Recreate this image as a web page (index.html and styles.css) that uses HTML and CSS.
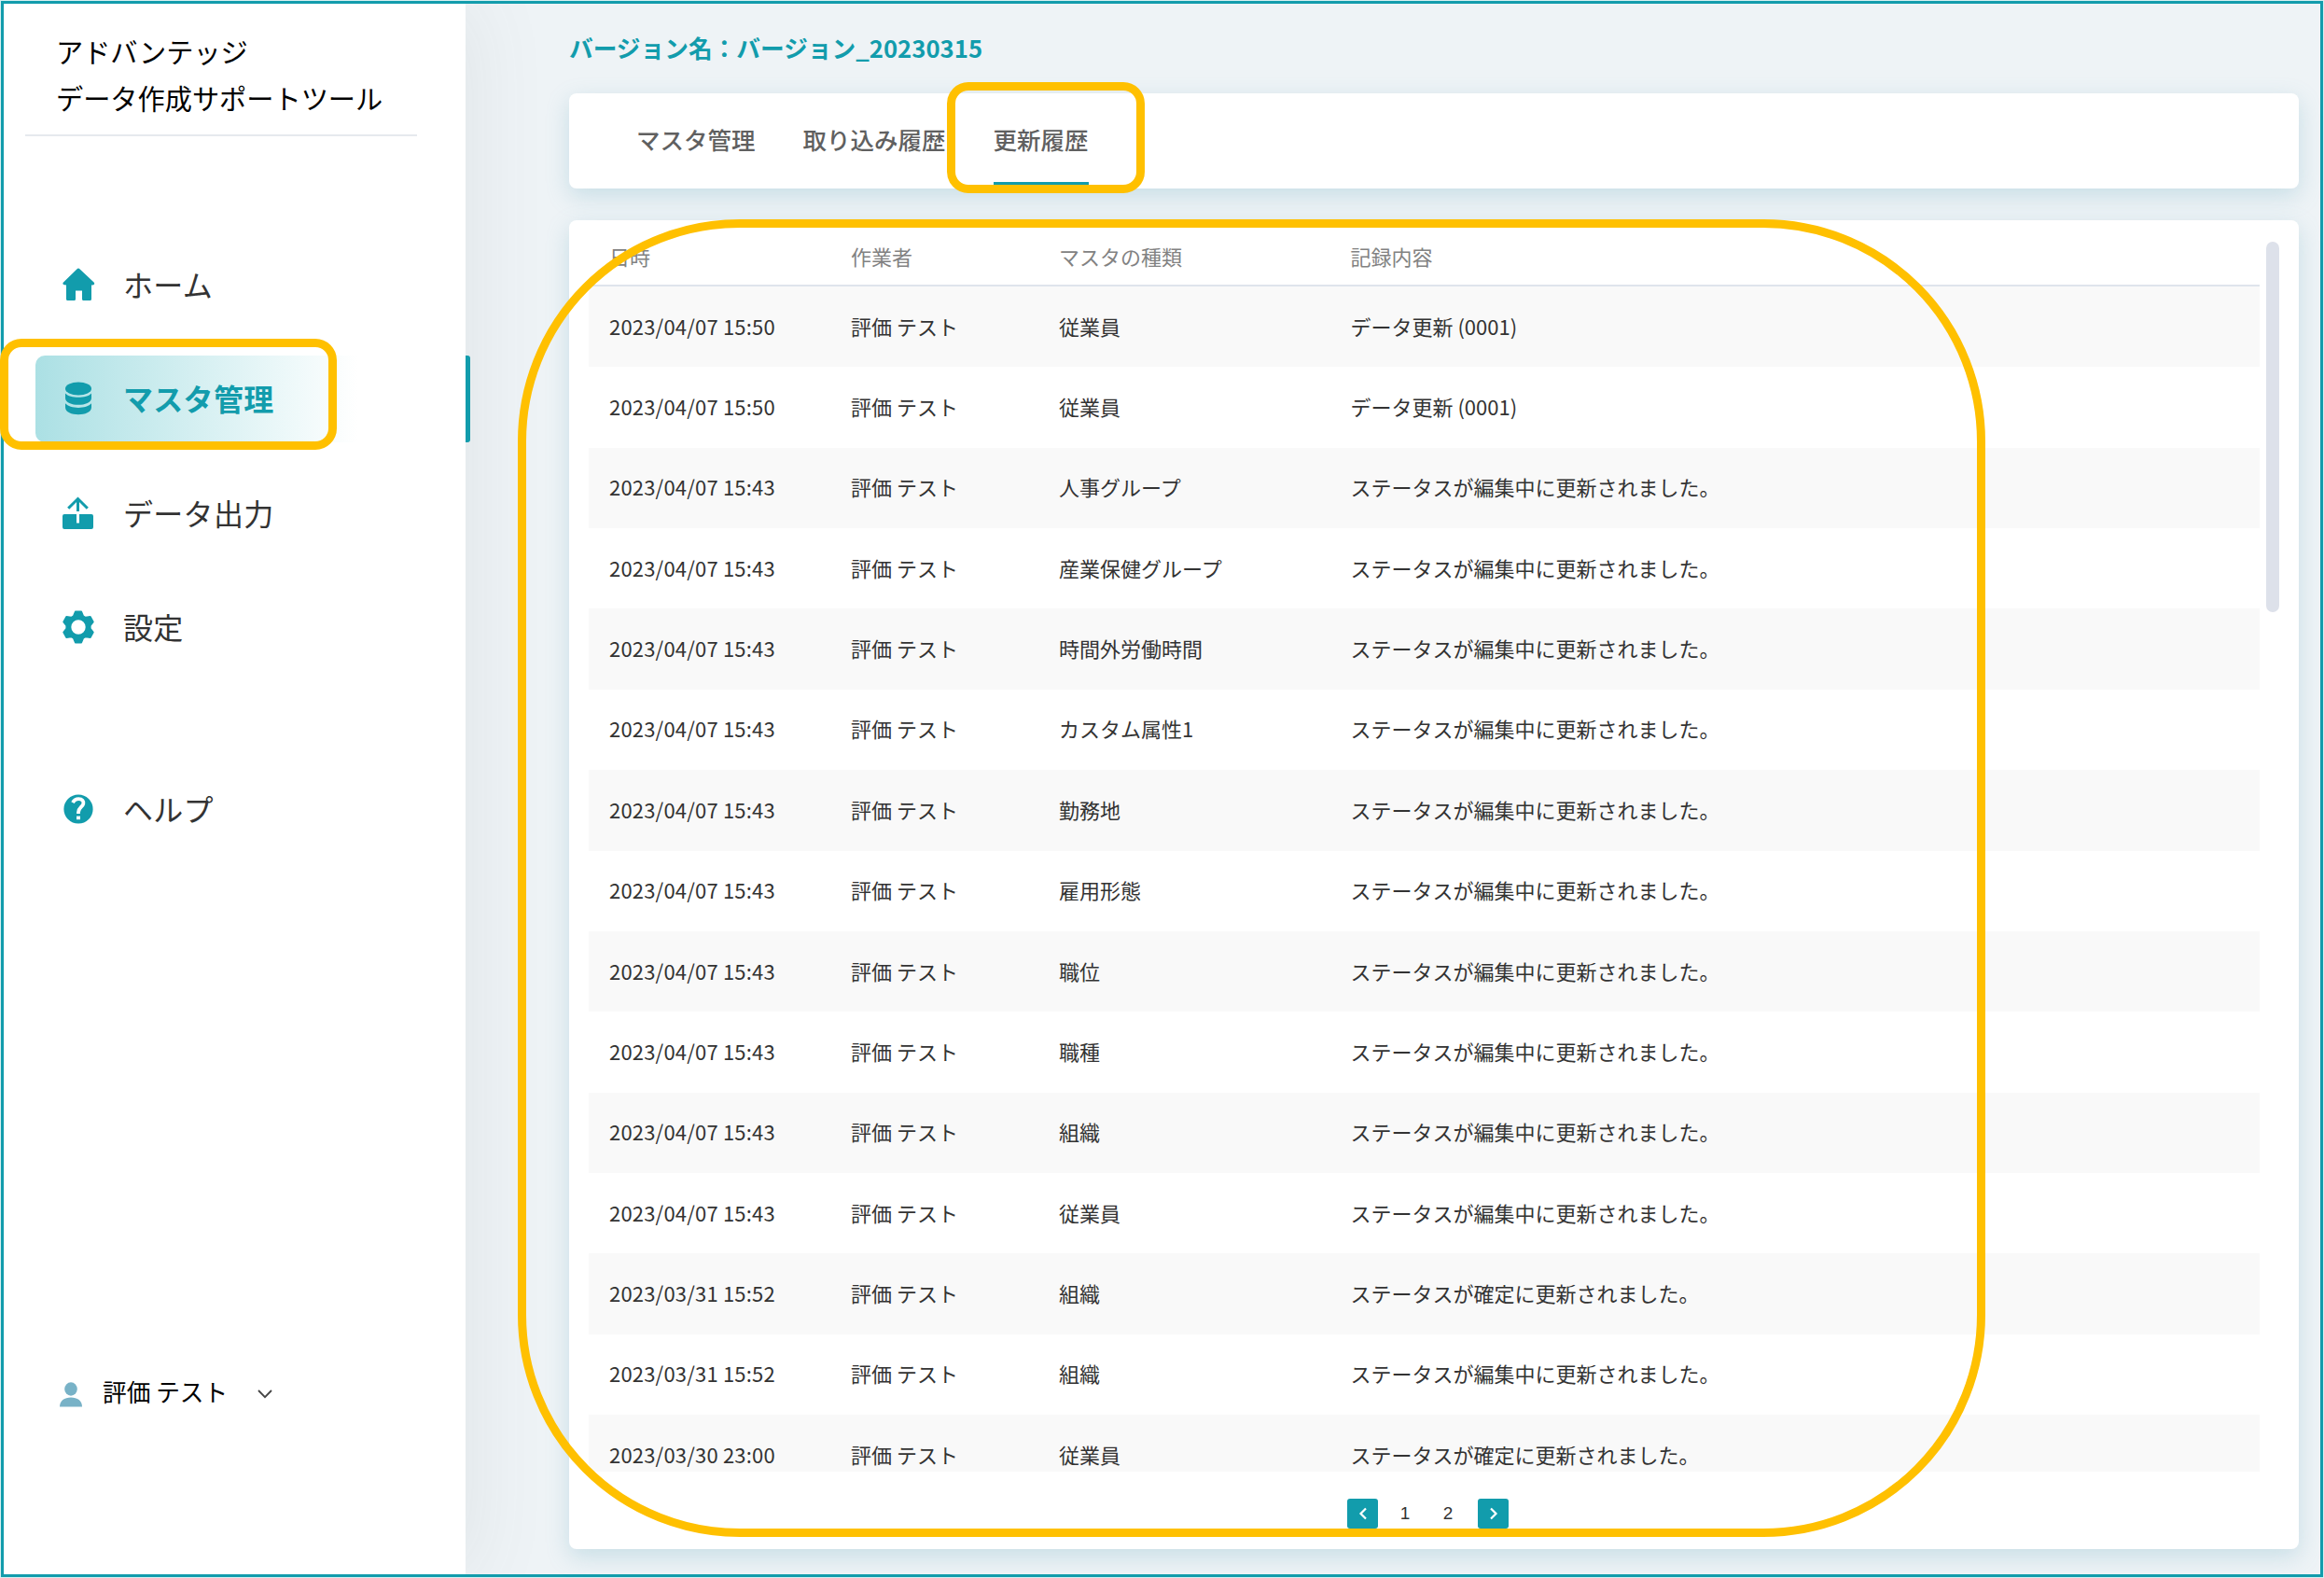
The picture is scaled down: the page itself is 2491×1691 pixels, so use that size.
FILE: index.html
```html
<!DOCTYPE html>
<html lang="ja">
<head>
<meta charset="utf-8">
<title>更新履歴</title>
<link rel="stylesheet" href="styles.css">
</head>
<body>
<div class="app">
  <aside class="sidebar">
    <div class="brand">アドバンテッジ<br>データ作成サポートツール</div>
    <nav class="nav">
      <a class="nav-item">
        <svg class="nav-icon" viewBox="0 0 36 36"><path d="M16.6 1.2q1.4-1.3 2.8 0L34.6 15.6q1.2 1.4 0 2.4-.7.5-2.6.5V33.500q0 1.500-1.500 1.500H23.500q-1.500 0-1.500-1.500V24.500h-7V33.500q0 1.500-1.500 1.500H6.500Q5 35 5 33.500V18.500q-2.500 0-3.200-.8-.9-1 .2-2.100z"/></svg>
        <span>ホーム</span>
      </a>
      <a class="nav-item active">
        <svg class="nav-icon" viewBox="0 0 36 36"><ellipse cx="18" cy="7.500" rx="14" ry="7"/><path d="M4 12.500C9 18.300 27 18.300 32 12.500V17.500C32 27.300 4 27.300 4 17.500zM4 23.300C9 29.500 27 29.500 32 23.300V27.500C32 37.800 4 37.800 4 27.500z"/></svg>
        <span>マスタ管理</span>
      </a>
      <a class="nav-item">
        <svg class="nav-icon" viewBox="0 0 36 36"><path d="M3 19h13v9.500h3V19h13q2 0 2 2V33q0 2-2 2H3q-2 0-2-2V21q0-2 2-2z"/><path class="stroke" d="M17.500 16V2.500M7.200 12.800 17.500 2.500 27.800 12.800"/></svg>
        <span>データ出力</span>
      </a>
      <a class="nav-item">
        <svg class="nav-icon" viewBox="0 0 36 36"><path class="gear" fill-rule="evenodd" d="M14.800 1.500h6.400l2 4.800 2.500 1.400 5.100-.7 3 5.400-3.100 4v3.200l3.100 4-3 5.400-5.100-.7-2.500 1.400-2 4.800h-6.400l-2-4.800-2.500-1.400-5.100.7-3-5.400 3.100-4v-3.200l-3.100-4 3-5.400 5.100.7 2.500-1.400zM18 9.400a8.600 8.600 0 1 0 0 17.200 8.600 8.600 0 0 0 0-17.200z"/></svg>
        <span>設定</span>
      </a>
      <a class="nav-item help">
        <svg class="nav-icon" viewBox="0 0 36 36"><circle cx="18" cy="18" r="15.600"/><path class="question" d="M12 11.200Q14 7.200 18.300 7.200C22.300 7.200 23.800 9.700 23.300 12.300 22.700 15.500 18 16.500 18 21.500V23"/><rect class="dot" x="16" y="25.600" width="4" height="3.600"/></svg>
        <span>ヘルプ</span>
      </a>
    </nav>
    <div class="user">
      <svg class="user-icon" viewBox="0 0 24 27"><ellipse cx="12" cy="7.500" rx="6.800" ry="7.200"/><path d="M0 26.500C0 20 5 16.500 12 16.500S24 20 24 26.500z"/></svg>
      <span>評価 テスト</span>
      <svg class="chevron" viewBox="0 0 16 10"><path d="M1 1 8 8.200 15 1"/></svg>
    </div>
  </aside>
  <main class="main">
    <h1 class="version">バージョン名：バージョン_20230315</h1>
    <div class="card tabs">
      <a class="tab">マスタ管理</a>
      <a class="tab">取り込み履歴</a>
      <a class="tab current">更新履歴</a>
    </div>
    <section class="card panel">
      <div class="table-area">
        <div class="table">
          <div class="row head"><span>日時</span><span>作業者</span><span>マスタの種類</span><span>記録内容</span></div>
          <div class="row"><span class="date">2023/04/07 15:50</span><span>評価 テスト</span><span>従業員</span><span>データ更新 (0001)</span></div>
          <div class="row"><span class="date">2023/04/07 15:50</span><span>評価 テスト</span><span>従業員</span><span>データ更新 (0001)</span></div>
          <div class="row"><span class="date">2023/04/07 15:43</span><span>評価 テスト</span><span>人事グループ</span><span>ステータスが編集中に更新されました。</span></div>
          <div class="row"><span class="date">2023/04/07 15:43</span><span>評価 テスト</span><span>産業保健グループ</span><span>ステータスが編集中に更新されました。</span></div>
          <div class="row"><span class="date">2023/04/07 15:43</span><span>評価 テスト</span><span>時間外労働時間</span><span>ステータスが編集中に更新されました。</span></div>
          <div class="row"><span class="date">2023/04/07 15:43</span><span>評価 テスト</span><span>カスタム属性1</span><span>ステータスが編集中に更新されました。</span></div>
          <div class="row"><span class="date">2023/04/07 15:43</span><span>評価 テスト</span><span>勤務地</span><span>ステータスが編集中に更新されました。</span></div>
          <div class="row"><span class="date">2023/04/07 15:43</span><span>評価 テスト</span><span>雇用形態</span><span>ステータスが編集中に更新されました。</span></div>
          <div class="row"><span class="date">2023/04/07 15:43</span><span>評価 テスト</span><span>職位</span><span>ステータスが編集中に更新されました。</span></div>
          <div class="row"><span class="date">2023/04/07 15:43</span><span>評価 テスト</span><span>職種</span><span>ステータスが編集中に更新されました。</span></div>
          <div class="row"><span class="date">2023/04/07 15:43</span><span>評価 テスト</span><span>組織</span><span>ステータスが編集中に更新されました。</span></div>
          <div class="row"><span class="date">2023/04/07 15:43</span><span>評価 テスト</span><span>従業員</span><span>ステータスが編集中に更新されました。</span></div>
          <div class="row"><span class="date">2023/03/31 15:52</span><span>評価 テスト</span><span>組織</span><span>ステータスが確定に更新されました。</span></div>
          <div class="row"><span class="date">2023/03/31 15:52</span><span>評価 テスト</span><span>組織</span><span>ステータスが編集中に更新されました。</span></div>
          <div class="row"><span class="date">2023/03/30 23:00</span><span>評価 テスト</span><span>従業員</span><span>ステータスが確定に更新されました。</span></div>
        </div>
        <div class="scroll-thumb"></div>
      </div>
      <div class="pager">
        <a class="page-btn"><svg viewBox="0 0 10 14"><path d="M8 1.500 2.500 7 8 12.500"/></svg></a>
        <a class="page">1</a>
        <a class="page">2</a>
        <a class="page-btn"><svg viewBox="0 0 10 14"><path d="M2 1.500 7.500 7 2 12.500"/></svg></a>
      </div>
    </section>
  </main>
  <div class="mark mark-nav"></div>
  <div class="mark mark-tab"></div>
  <div class="mark mark-table"></div>
</div>
</body>
</html>
```
FILE: styles.css
```css
* { box-sizing: border-box; }

body {
  margin: 0;
  width: 2491px;
  height: 1691px;
  padding: 1px;
  overflow: hidden;
  background: #d5eff1;
  font-family: "Noto Sans CJK JP", sans-serif;
  color: #333;
}

.app {
  display: flex;
  width: 2489px;
  height: 1689px;
  border: 3px solid #129cac;
  background: #eef3f6;
}

/* Sidebar */
.sidebar {
  display: flex;
  flex-direction: column;
  flex: none;
  width: 495px;
  background: #fff;
  box-shadow: 6px 0 80px rgba(90, 90, 90, .09);
  clip-path: inset(0 -120px 0 0);
}

.brand {
  width: 420px;
  height: 142px;
  margin-left: 23px;
  padding: 25px 0 0 33px;
  border-bottom: 2px solid #e6e9ee;
  color: #000;
  font-size: 29.200px;
  line-height: 50px;
  white-space: nowrap;
}

.nav {
  display: flex;
  flex-direction: column;
  gap: 29px;
  margin-top: 112px;
}

.nav-item {
  display: flex;
  align-items: center;
  gap: 30px;
  height: 93.500px;
  margin-left: 34px;
  padding-left: 28px;
  border-radius: 10px 0 0 10px;
  font-size: 32px;
  letter-spacing: .3px;
  line-height: 46px;
}
.nav-item span { position: relative; top: -1px; }

.nav-item.active {
  border-right: 5px solid #129cac;
  margin-right: -5px;
  background: linear-gradient(90deg, #abe0e4, #fff 345px) no-repeat 0 0 / 461px 100%;
  color: #129cac;
  font-weight: 700;
  border-radius: 10px 3px 3px 10px;
}
.nav-item.help { margin-top: 72px; }

.nav-icon { width: 36px; height: 36px; fill: #129cac; }
.nav-icon .gear { stroke: #129cac; stroke-width: 1.800; stroke-linejoin: round; }
.nav-icon .stroke { fill: none; stroke: #129cac; stroke-width: 3; }
.nav-icon .question { fill: none; stroke: #fff; stroke-width: 3.800; }
.nav-icon .dot { fill: #fff; }

.user {
  display: flex;
  align-items: center;
  margin: auto 0 173px 60px;
  height: 40px;
  color: #000;
  font-size: 25.700px;
  line-height: 38px;
}
.user span { position: relative; top: -3px; }
.user-icon { width: 24px; height: 27px; margin-right: 22px; fill: #78b2c7; }
.chevron { width: 16px; height: 10px; margin-left: 32px; fill: none; stroke: #444; stroke-width: 1.800; }

/* Content */
.main {
  display: flex;
  flex-direction: column;
  width: 1854px;
  margin-left: 111px;
}

.version {
  height: 96px;
  margin: 0;
  padding-top: 27px;
  color: #129cac;
  font-size: 25.700px;
  line-height: 40px;
  font-weight: 700;
}

.card {
  background: #fff;
  border-radius: 8px;
  box-shadow: 0 8px 24px rgba(100, 170, 190, .28);
}

.tabs {
  display: flex;
  gap: 51px;
  height: 101.500px;
  padding-left: 72px;
}
.tab {
  display: flex;
  align-items: center;
  border-bottom: 7px solid transparent;
  padding-top: 3px;
  color: #606060;
  font-size: 25.500px;
  font-weight: 500;
  line-height: 38px;
}
.tab.current {
  background: linear-gradient(#129cac, #129cac) no-repeat 0 100% / 100% 7px;
  background-origin: border-box;
}

.panel { height: 1424px; margin-top: 34.500px; }

.table-area { display: flex; height: 1341px; padding-left: 21px; }

.table { width: 1791px; overflow: hidden; }

.row {
  display: grid;
  grid-template-columns: 259px 223px 312.500px 1fr;
  align-items: center;
  height: 86.360px;
  padding: 0 0 3px 22px;
  font-size: 22px;
  line-height: 32px;
}
.row:nth-child(even) { background: #f9f9f9; }
.date { letter-spacing: .19px; }

.row.head {
  height: 71px;
  padding: 7px 0 0 22px;
  border-bottom: 2px solid #dfe4ec;
  color: #828282;
}

.scroll-thumb {
  width: 14px;
  height: 397px;
  margin: 23px 0 0 7px;
  border-radius: 7px;
  background: #dde1ea;
}

.pager {
  display: flex;
  align-items: center;
  margin: 29px 0 0 834px;
  height: 32px;
  font: 19px "Liberation Sans", sans-serif;
}
.page { width: 46px; text-align: center; line-height: 24px; padding-bottom: 1px; }
.page:nth-child(2) { margin-left: 6px; }
.page:nth-child(3) { margin-right: 9px; }
.page-btn {
  display: flex;
  align-items: center;
  justify-content: center;
  width: 33px;
  height: 32px;
  border-radius: 3px;
  background: #129cac;
}
.page-btn svg { width: 10px; height: 14px; fill: none; stroke: #fff; stroke-width: 2.200; }

/* Highlight frames over the page */
.mark { position: absolute; border: 9px solid #ffc000; }
.mark-nav { left: 0; top: 363px; width: 361px; height: 119px; border-radius: 23px; }
.mark-tab { left: 1015px; top: 88px; width: 212px; height: 119px; border-radius: 23px; }
.mark-table { left: 555px; top: 235px; width: 1573px; height: 1412px; border-radius: 238px; }
```
